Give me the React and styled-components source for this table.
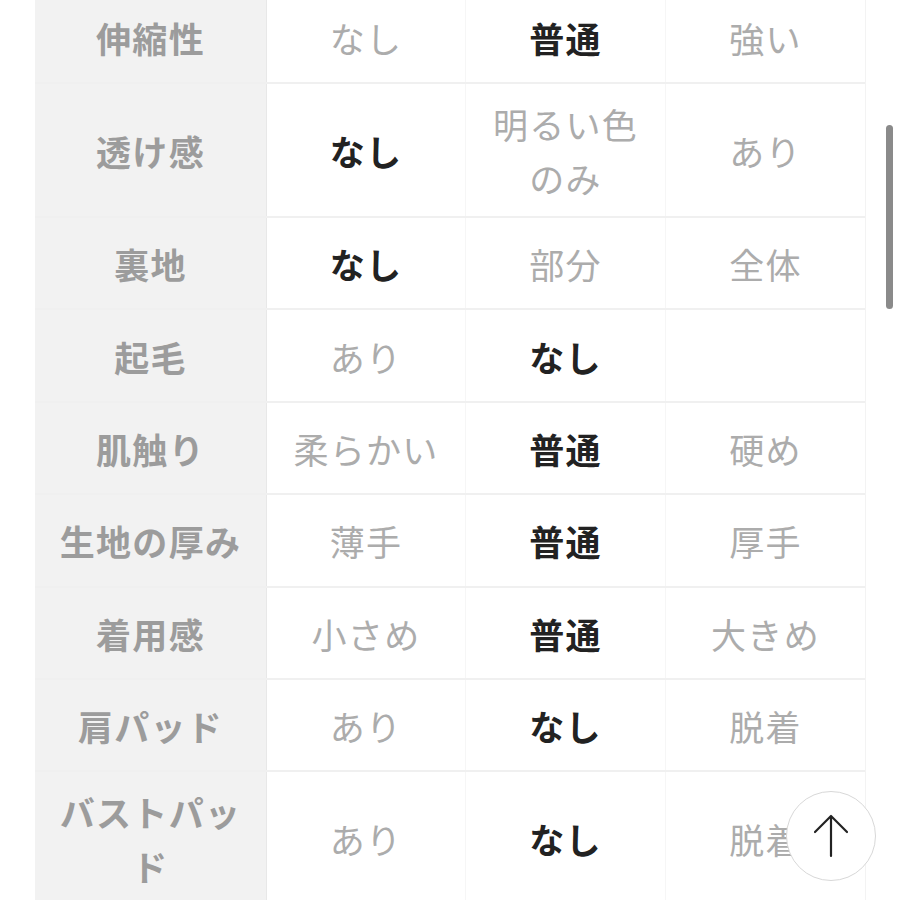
import React from "react";
import styled, { createGlobalStyle } from "styled-components";

const GlobalStyle = createGlobalStyle`
	html, body {
		margin: 0;
		padding: 0;
		background: #fff;
		overflow: hidden;
	}
	body {
		font-family: "Noto Sans CJK JP", "Noto Sans", sans-serif;
	}
`;

const rows = [
	{ label: "伸縮性", values: ["なし", "普通", "強い"], active: 1 },
	{ label: "透け感", values: ["なし", "明るい色のみ", "あり"], active: 0 },
	{ label: "裏地", values: ["なし", "部分", "全体"], active: 0 },
	{ label: "起毛", values: ["あり", "なし", ""], active: 1 },
	{ label: "肌触り", values: ["柔らかい", "普通", "硬め"], active: 1 },
	{ label: "生地の厚み", values: ["薄手", "普通", "厚手"], active: 1 },
	{ label: "着用感", values: ["小さめ", "普通", "大きめ"], active: 1 },
	{ label: "肩パッド", values: ["あり", "なし", "脱着"], active: 1 },
	{ label: "バストパッド", values: ["あり", "なし", "脱着"], active: 1 },
];

const App = () => {
	return (
		<Page>
			<GlobalStyle />
			<Table>
				{rows.map((row, key) => (
					<Row key={key}>
						<HeadCell>{row.label}</HeadCell>
						{row.values.map((value, i) => (
							<Cell key={i} active={i === row.active}>
								{value}
							</Cell>
						))}
					</Row>
				))}
			</Table>
			<ScrollThumb />
			<TopButton type="button" aria-label="ページトップへ">
				<svg width="40" height="48" viewBox="0 0 40 48" fill="none">
					<path
						d="M20 44V5M4 20L20 4l16 16"
						stroke="#222"
						strokeWidth="2.2"
						strokeLinecap="round"
						strokeLinejoin="round"
					/>
				</svg>
			</TopButton>
		</Page>
	);
};

export default App;

const Page = styled.div`
	position: relative;
	width: 900px;
	height: 900px;
	overflow: hidden;
`;

const Table = styled.div`
	display: flex;
	flex-direction: column;
	width: 830px;
	margin: -8.4px 0 0 35px;
	border-right: 1px solid #f3f3f3;
`;

const Row = styled.div`
	display: grid;
	grid-template-columns: 232px 199px 200px 199px;
	min-height: 92.4px;
	border-bottom: 2px solid #f0f0f0;
	box-sizing: border-box;
`;

const HeadCell = styled.div`
	display: flex;
	align-items: center;
	justify-content: center;
	text-align: center;
	padding: 13px 12px 11px;
	background: #f2f2f2;
	border-right: 1px solid #e8e8e8;
	color: #9c9c9c;
	font-size: 35px;
	font-weight: 700;
	line-height: 54px;
	letter-spacing: 1.3px;
`;

const Cell = styled.div`
	display: flex;
	align-items: center;
	justify-content: center;
	text-align: center;
	padding: 13px 12px 11px;
	background: #fff;
	border-right: 1px solid #f6f6f6;
	color: ${props => (props.active ? "#222" : "#acacac")};
	font-size: 35px;
	font-weight: ${props => (props.active ? 700 : 400)};
	line-height: 54px;
	letter-spacing: 1.3px;

	&:last-child {
		border-right: none;
	}
`;

const ScrollThumb = styled.div`
	position: absolute;
	left: 886px;
	top: 125px;
	width: 7px;
	height: 184px;
	border-radius: 4px;
	background: #8a8a8a;
`;

const TopButton = styled.button`
	position: absolute;
	left: 786px;
	top: 791px;
	width: 90px;
	height: 90px;
	padding: 0;
	display: flex;
	align-items: center;
	justify-content: center;
	border-radius: 50%;
	border: 1.5px solid #d8d8d8;
	background: #fff;
	cursor: pointer;
`;
